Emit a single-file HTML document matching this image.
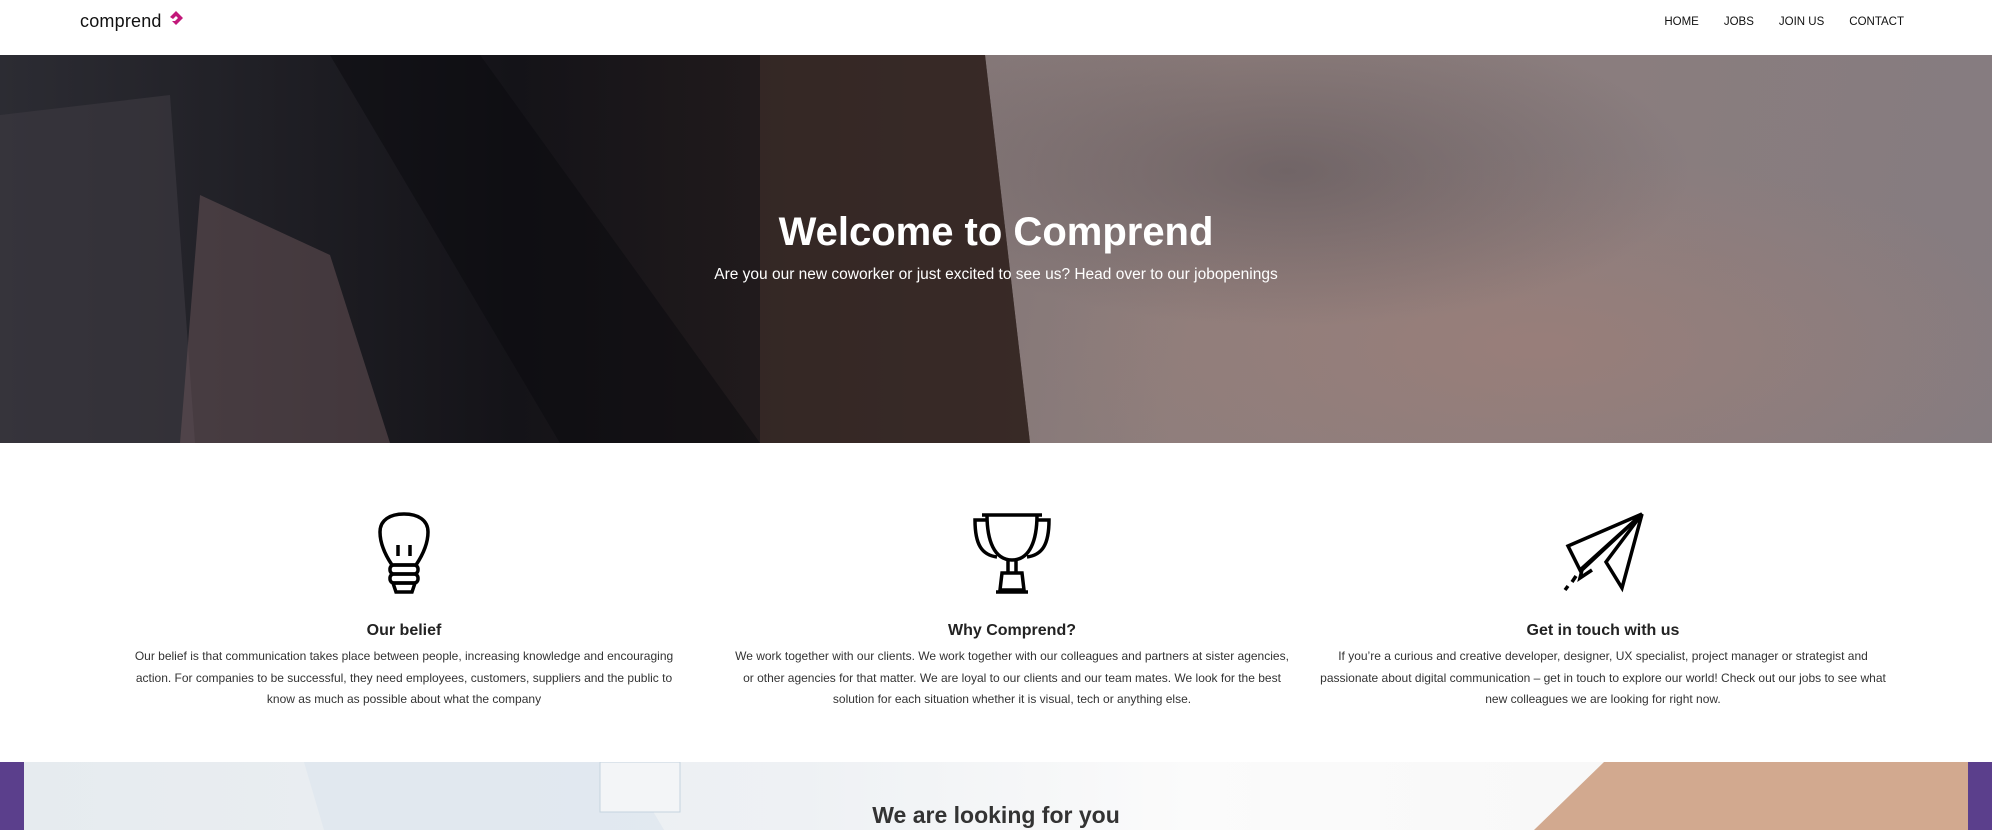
<!DOCTYPE html>
<html><head><meta charset="utf-8"><style>
*{margin:0;padding:0;box-sizing:border-box}
body{width:1992px;height:830px;overflow:hidden;background:#fff;font-family:"Liberation Sans",sans-serif;color:#333;position:relative}
.nav{position:absolute;top:0;left:0;width:1992px;height:55px;background:#fff}
.logo{position:absolute;left:80px;top:11px;font-size:18px;color:#111;letter-spacing:0.2px}
.nav ul{position:absolute;right:88px;top:16px;list-style:none;display:flex;gap:25px;font-size:11.5px;color:#111}
.hero{position:absolute;top:55px;left:0;width:1992px;height:388px;overflow:hidden;
background:linear-gradient(100deg,#6e6466 0%,#7d7274 40%,#8e7e7c 60%,#857c80 100%)}
.hero h1{position:absolute;top:155px;width:100%;text-align:center;color:#fff;font-size:40px;font-weight:bold}
.hero p{position:absolute;top:211px;width:100%;text-align:center;color:#fff;font-size:15.5px}
.col{position:absolute;top:622px;width:566px;text-align:center}
.col h3{font-size:16px;color:#222;margin-bottom:6px}
.col p{font-size:12px;line-height:21.5px;color:#333}
.icon{position:absolute;top:510px}
.strip{position:absolute;top:762px;left:0;width:1992px;height:68px;background:#5b3f8c}
.strip .in{position:absolute;left:24px;right:24px;top:0;bottom:0;overflow:hidden;background:linear-gradient(90deg,#e6ebef 0%,#eef1f4 40%,#fbfbfb 60%,#f5f5f5 100%)}
</style></head><body>
<div class="nav">
<div class="logo">comprend<svg width="16" height="16" viewBox="0 0 16 16" style="position:absolute;left:88px;top:-1px"><path d="M8 1 L15 8 L8 15 L4 11 L7 11 L10 8 L8 6 L5 9 L2 7 Z" fill="#c2187a"/></svg></div>
<ul><li>HOME</li><li>JOBS</li><li>JOIN US</li><li>CONTACT</li></ul>
</div>
<div class="hero">
<svg width="1992" height="388" style="position:absolute;left:0;top:0">
<defs><linearGradient id="b" x1="0" y1="0" x2="1" y2="0"><stop offset="0" stop-color="#2c2c33"/><stop offset="0.5" stop-color="#141318"/><stop offset="1" stop-color="#2e2220"/></linearGradient>
<radialGradient id="c" cx="0.55" cy="0.75" r="0.5"><stop offset="0" stop-color="#a27f77" stop-opacity="0.6"/><stop offset="1" stop-color="#a27f77" stop-opacity="0"/></radialGradient>
<radialGradient id="d" cx="0.3" cy="0.3" r="0.4"><stop offset="0" stop-color="#5e5458" stop-opacity="0.6"/><stop offset="1" stop-color="#5e5458" stop-opacity="0"/></radialGradient></defs>
<rect x="985" y="0" width="1007" height="388" fill="url(#c)"/>
<rect x="985" y="0" width="1007" height="388" fill="url(#d)"/>
<polygon points="0,0 985,0 1030,388 0,388" fill="url(#b)"/>
<polygon points="0,60 170,40 195,388 0,388" fill="#3b383f" opacity="0.7"/>
<polygon points="200,140 330,200 390,388 180,388" fill="#6b5559" opacity="0.5"/>
<polygon points="330,0 480,0 760,388 560,388" fill="#0a0a0d" opacity="0.5"/>
<polygon points="760,0 985,0 1030,388 760,388" fill="#3d2e2a" opacity="0.7"/>
</svg>
<h1>Welcome to Comprend</h1>
<p>Are you our new coworker or just excited to see us? Head over to our jobopenings</p>
</div>
<svg class="icon" style="left:378px" width="52" height="84" viewBox="0 0 52 84" fill="none" stroke="#000" stroke-width="3.5">
<path d="M14 55 C4 40 2 30 2 22 C2 10 12 4 26 4 C40 4 50 10 50 22 C50 30 48 40 38 55 Z"/>
<path d="M20 46 L20 35 M32 46 L32 35"/>
<rect x="12" y="55" width="28" height="9" rx="4"/><rect x="12" y="64" width="28" height="9" rx="4"/>
<path d="M15 73 L37 73 L34 82 L18 82 Z"/></svg>
<svg class="icon" style="left:972px" width="80" height="84" viewBox="0 0 80 84" fill="none" stroke="#000" stroke-width="3.5">
<path d="M10 5 L70 5"/><path d="M15 5 C15 30 22 50 40 50 C58 50 65 30 65 5"/>
<path d="M15 10 L3 10 C3 35 10 45 25 47 M65 10 L77 10 C77 35 70 45 55 47"/>
<path d="M36 50 L36 63 M44 50 L44 63"/><path d="M30 63 L50 63 L52 80 L28 80 Z"/><path d="M24 82 L56 82"/></svg>
<svg class="icon" style="left:1562px" width="84" height="84" viewBox="0 0 84 84" fill="none" stroke="#000" stroke-width="3.5">
<path d="M80 4 L6 36 L18 60 Z"/><path d="M80 4 L60 78 L44 52 Z"/><path d="M80 4 L20 60 L18 68 L30 60"/>
<path d="M14 66 L10 72 M6 76 L3 80"/></svg>
<div class="col" style="left:121px"><h3>Our belief</h3><p>Our belief is that communication takes place between people, increasing knowledge and encouraging action. For companies to be successful, they need employees, customers, suppliers and the public to know as much as possible about what the company</p></div>
<div class="col" style="left:729px"><h3>Why Comprend?</h3><p>We work together with our clients. We work together with our colleagues and partners at sister agencies, or other agencies for that matter. We are loyal to our clients and our team mates. We look for the best solution for each situation whether it is visual, tech or anything else.</p></div>
<div class="col" style="left:1320px"><h3>Get in touch with us</h3><p>If you’re a curious and creative developer, designer, UX specialist, project manager or strategist and passionate about digital communication – get in touch to explore our world! Check out our jobs to see what new colleagues we are looking for right now.</p></div>
<div class="strip"><div class="in">
<svg width="1944" height="68" style="position:absolute;left:0;top:0">
<polygon points="1510,68 1580,0 1944,0 1944,68" fill="#d2a98f"/>
<polygon points="280,0 600,0 640,68 300,68" fill="#dde6ee" opacity="0.7"/>
<rect x="576" y="0" width="80" height="50" fill="#f3f5f7" stroke="#c5d3df"/>
</svg>
<div style="position:absolute;left:0;width:1944px;top:40px;text-align:center;font-size:23px;font-weight:bold;color:#333">We are looking for you</div>
</div></div>
</body></html>
